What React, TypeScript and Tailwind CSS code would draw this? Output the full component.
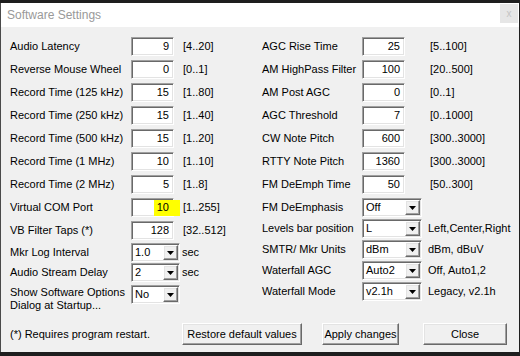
import React from "react";

const sunken =
  "border border-t-[#a0a0a0] border-l-[#a0a0a0] border-b-white border-r-white shadow-[inset_1px_1px_0_#696969,inset_-1px_-1px_0_#e3e3e3]";
const raised =
  "border border-t-white border-l-white border-b-[#696969] border-r-[#696969] shadow-[inset_-1px_-1px_0_#a0a0a0,inset_1px_1px_0_#e3e3e3]";

function TextBox({ value, highlight }: { value: string; highlight?: boolean }) {
  return (
    <div className={`relative w-[43px] h-[19px] bg-white ${sunken} flex items-center justify-end pr-[4px] shrink-0`}>
      {highlight && <div className="absolute left-[22px] top-[1px] w-[26px] h-[16px] bg-[#ffff00]" />}
      <span className="relative leading-[17px]">{value}</span>
    </div>
  );
}

function Combo({ value, width }: { value: string; width: string }) {
  return (
    <div className={`relative ${width} h-[19px] bg-white ${sunken} flex items-center shrink-0`}>
      <span className="pl-[3px] leading-[17px] flex-1">{value}</span>
      <div className={`w-[15px] h-[15px] mr-[1px] bg-[#f0f0f0] ${raised} flex items-center justify-center`}>
        <svg width="7" height="4" viewBox="0 0 7 4">
          <polygon points="0,0 7,0 3.5,4" fill="#000" />
        </svg>
      </div>
    </div>
  );
}

function TBRow({
  label,
  value,
  range,
  labelW,
  rangeMl,
  highlight,
}: {
  label: string;
  value: string;
  range: string;
  labelW: string;
  rangeMl: string;
  highlight?: boolean;
}) {
  return (
    <div className="flex items-center h-[19px]">
      <div className={`${labelW} shrink-0 whitespace-nowrap`}>{label}</div>
      <TextBox value={value} highlight={highlight} />
      <div className={`${rangeMl} whitespace-nowrap`}>{range}</div>
    </div>
  );
}

function ComboRow({
  label,
  value,
  hint,
  labelW,
  comboW,
  hintMl,
}: {
  label: string;
  value: string;
  hint?: string;
  labelW: string;
  comboW: string;
  hintMl: string;
}) {
  return (
    <div className="flex items-center h-[19px]">
      <div className={`${labelW} shrink-0 whitespace-nowrap`}>{label}</div>
      <Combo value={value} width={comboW} />
      {hint && <div className={`${hintMl} whitespace-nowrap`}>{hint}</div>}
    </div>
  );
}

function Button({ label, width }: { label: string; width: string }) {
  return (
    <div className={`${width} h-[22px] bg-[#f0f0f0] ${raised} flex items-center justify-center shrink-0`}>
      {label}
    </div>
  );
}

export default function App() {
  const left: [string, string, string][] = [
    ["Audio Latency", "9", "[4..20]"],
    ["Reverse Mouse Wheel", "0", "[0..1]"],
    ["Record Time (125 kHz)", "15", "[1..80]"],
    ["Record Time (250 kHz)", "15", "[1..40]"],
    ["Record Time (500 kHz)", "15", "[1..20]"],
    ["Record Time (1 MHz)", "10", "[1..10]"],
    ["Record Time (2 MHz)", "5", "[1..8]"],
    ["Virtual COM Port", "10", "[1..255]"],
    ["VB Filter Taps (*)", "128", "[32..512]"],
  ];
  const right: [string, string, string][] = [
    ["AGC Rise Time", "25", "[5..100]"],
    ["AM HighPass Filter", "100", "[20..500]"],
    ["AM Post AGC", "0", "[0..1]"],
    ["AGC Threshold", "7", "[0..1000]"],
    ["CW Note Pitch", "600", "[300..3000]"],
    ["RTTY Note Pitch", "1360", "[300..3000]"],
    ["FM DeEmph Time", "50", "[50..300]"],
  ];
  const rightCombos: [string, string, string][] = [
    ["FM DeEmphasis", "Off", ""],
    ["Levels bar position", "L", "Left,Center,Right"],
    ["SMTR/ Mkr Units", "dBm", "dBm, dBuV"],
    ["Waterfall AGC", "Auto2", "Off, Auto1,2"],
    ["Waterfall Mode", "v2.1h", "Legacy, v2.1h"],
  ];

  return (
    <div
      className="w-[520px] h-[356px] bg-[#1e1e1e] pt-[3px] overflow-hidden text-[11px] text-black"
      style={{ fontFamily: '"Liberation Sans", Arial, sans-serif' }}
    >
      <div className="w-[519px] h-[349px] bg-[#f0f0f0] border-l border-[#4a4a4a] flex flex-col">
        {/* Title bar */}
        <div className="h-[24px] bg-white flex items-start justify-between shrink-0">
          <div className="pl-[6px] pt-[4px] text-[12px] text-[#999999] leading-[16px]">Software Settings</div>
          <div className="w-[18px] h-[19px] mt-[1px] mr-[1px] bg-[#e6e6e6] flex items-center justify-center text-[10px] text-[#c4c4c4] leading-none">
            x
          </div>
        </div>

        {/* Main */}
        <div className="h-[296px] flex pl-[9px] pt-[10px] shrink-0">
          {/* Left column */}
          <div className="w-[252px] flex flex-col shrink-0">
            <div className="flex flex-col gap-[4px]">
              {left.map(([l, v, r]) => (
                <TBRow
                  key={l}
                  label={l}
                  value={v}
                  range={r}
                  labelW="w-[121px]"
                  rangeMl="ml-[9px]"
                  highlight={l === "Virtual COM Port"}
                />
              ))}
            </div>
            <div className="mt-[3px]">
              <ComboRow label="Mkr Log Interval" value="1.0" hint="sec" labelW="w-[121px]" comboW="w-[49px]" hintMl="ml-[2px]" />
            </div>
            <div className="mt-[1px]">
              <ComboRow label="Audio Stream Delay" value="2" hint="sec" labelW="w-[121px]" comboW="w-[49px]" hintMl="ml-[2px]" />
            </div>
            <div className="mt-[3px] flex items-start">
              <div className="w-[121px] shrink-0 leading-[13px] pt-[1px] whitespace-nowrap">
                Show Software Options
                <br />
                Dialog at Startup...
              </div>
              <Combo value="No" width="w-[49px]" />
            </div>
          </div>

          {/* Right column */}
          <div className="flex flex-col">
            <div className="flex flex-col gap-[4px]">
              {right.map(([l, v, r]) => (
                <TBRow key={l} label={l} value={v} range={r} labelW="w-[100px]" rangeMl="ml-[25px]" />
              ))}
            </div>
            <div className="mt-[4px] flex flex-col gap-[2px]">
              {rightCombos.map(([l, v, h]) => (
                <ComboRow key={l} label={l} value={v} hint={h || undefined} labelW="w-[100px]" comboW="w-[60px]" hintMl="ml-[6px]" />
              ))}
            </div>
          </div>
        </div>

        {/* Bottom row */}
        <div className="h-[22px] flex items-center pl-[9px] shrink-0">
          <div className="w-[172px] shrink-0 whitespace-nowrap">(*) Requires program restart.</div>
          <Button label="Restore default values" width="w-[120px]" />
          <div className="w-[20px] shrink-0" />
          <Button label="Apply changes" width="w-[77px]" />
          <div className="w-[24px] shrink-0" />
          <Button label="Close" width="w-[84px]" />
        </div>
      </div>
    </div>
  );
}
